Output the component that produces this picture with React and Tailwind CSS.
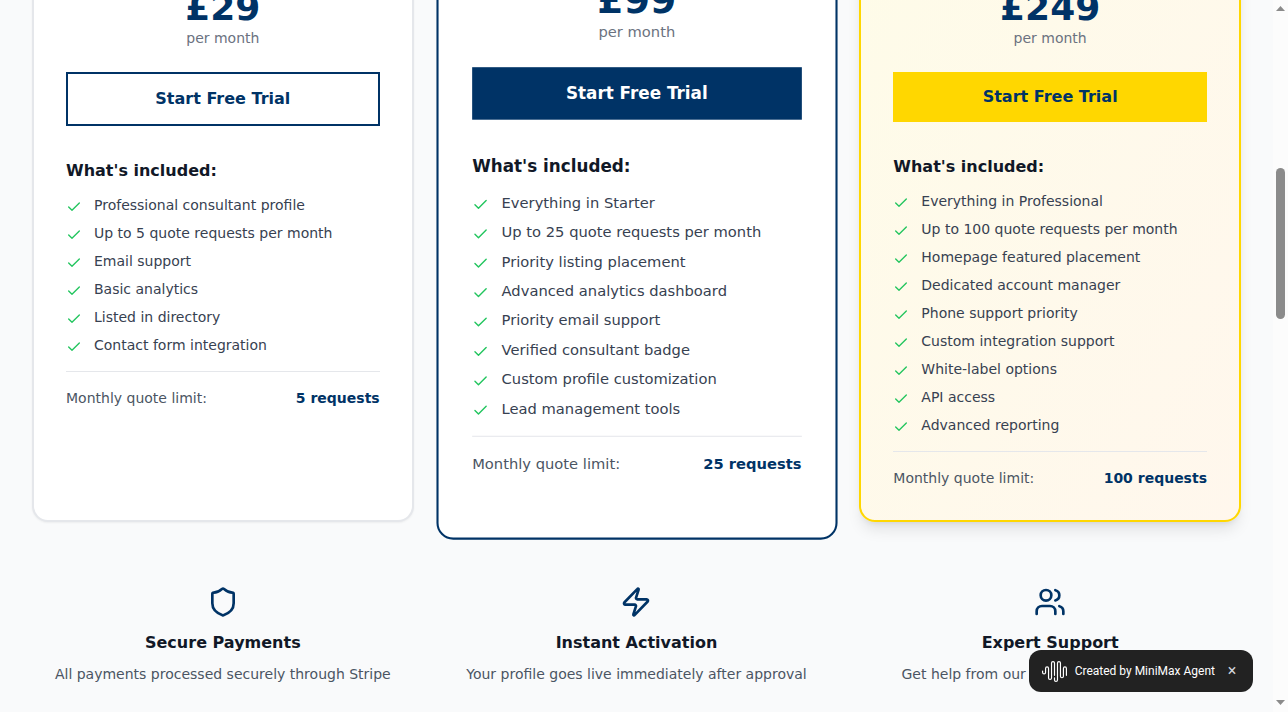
import { Check, Shield, Zap, Users } from "lucide-react";

const plans = [
  {
    price: "£29",
    limit: "5 requests",
    card: "border-[#e5e7eb] bg-white shadow-xs",
    button: "border-2 border-[#003366] bg-white text-[#003366]",
    features: [
      "Professional consultant profile",
      "Up to 5 quote requests per month",
      "Email support",
      "Basic analytics",
      "Listed in directory",
      "Contact form integration",
    ],
  },
  {
    price: "£99",
    limit: "25 requests",
    card: "scale-105 border-[#003366] bg-white",
    button: "bg-[#003366] text-white",
    features: [
      "Everything in Starter",
      "Up to 25 quote requests per month",
      "Priority listing placement",
      "Advanced analytics dashboard",
      "Priority email support",
      "Verified consultant badge",
      "Custom profile customization",
      "Lead management tools",
    ],
  },
  {
    price: "£249",
    limit: "100 requests",
    card: "border-[#ffd700] bg-linear-to-br from-[#fefce8] to-[#fff7ed] shadow-lg",
    button: "bg-[#ffd700] text-[#003366]",
    features: [
      "Everything in Professional",
      "Up to 100 quote requests per month",
      "Homepage featured placement",
      "Dedicated account manager",
      "Phone support priority",
      "Custom integration support",
      "White-label options",
      "API access",
      "Advanced reporting",
    ],
  },
];

const benefits = [
  { Icon: Shield, title: "Secure Payments", text: "All payments processed securely through Stripe" },
  { Icon: Zap, title: "Instant Activation", text: "Your profile goes live immediately after approval" },
  { Icon: Users, title: "Expert Support", text: "Get help from our dedicated support team" },
];

function PlanCard({ plan }) {
  return (
    <article className={`rounded-2xl border-2 px-8 pt-[172px] pb-8 ${plan.card}`}>
      <div className="mb-6 text-center">
        <div className="text-4xl font-bold text-[#003366]">{plan.price}</div>
        <div className="text-sm text-[#6b7280]">per month</div>
      </div>
      <button type="button" className={`block w-full px-6 py-3 text-base leading-[26px] font-semibold ${plan.button}`}>
        Start Free Trial
      </button>
      <h4 className="mt-8 mb-3 leading-[25px] font-semibold text-[#111827]">What's included:</h4>
      <ul className="space-y-2">
        {plan.features.map((feature) => (
          <li key={feature} className="flex items-start gap-3 text-sm text-[#374151]">
            <Check className="mt-1 size-4 shrink-0 text-[#22c55e]" />
            <span>{feature}</span>
          </li>
        ))}
      </ul>
      <div className="mt-4 flex justify-between border-t border-[#e5e7eb] pt-4 text-sm">
        <span className="text-[#4b5563]">Monthly quote limit:</span>
        <span className="font-semibold text-[#003366]">{plan.limit}</span>
      </div>
    </article>
  );
}

function AgentBadge() {
  return (
    <div className="fixed right-[35px] bottom-5 flex h-[42px] items-center rounded-xl bg-[#222222] pr-3 pl-[13px] font-['Roboto',sans-serif] text-xs text-white">
      <svg viewBox="0 0 24 24" className="mr-2 size-[25px]" fill="currentColor" aria-hidden="true">
        <path d="M11.43 3.92a.86.86 0 1 0-1.718 0v14.236a1.999 1.999 0 0 1-3.997 0V9.022a.86.86 0 1 0-1.718 0v3.87a1.999 1.999 0 0 1-3.997 0V11.49a.57.57 0 0 1 1.139 0v1.404a.86.86 0 0 0 1.719 0V9.022a1.999 1.999 0 0 1 3.997 0v9.134a.86.86 0 0 0 1.719 0V3.92a1.998 1.998 0 1 1 3.996 0v11.788a.57.57 0 1 1-1.139 0zm10.572 3.105a2 2 0 0 0-1.999 1.997v7.63a.86.86 0 0 1-1.718 0V3.923a1.999 1.999 0 0 0-3.997 0v16.16a.86.86 0 0 1-1.719 0V18.08a.57.57 0 1 0-1.138 0v2a1.998 1.998 0 0 0 3.996 0V3.92a.86.86 0 0 1 1.719 0v12.73a1.999 1.999 0 0 0 3.996 0V9.023a.86.86 0 1 1 1.72 0v6.686a.57.57 0 0 0 1.138 0V9.022a2 2 0 0 0-1.998-1.997" />
      </svg>
      <span>Created by MiniMax Agent</span>
      <button type="button" aria-label="Close" className="ml-2 flex size-[18px] items-center justify-center text-base leading-none text-gray-300">
        ×
      </button>
    </div>
  );
}

function ScrollTrack() {
  return (
    <div className="flex w-[15px] shrink-0 flex-col items-center bg-[#fcfcfc]" aria-hidden="true">
      <svg viewBox="0 0 15 17" className="h-[17px] w-[15px]" fill="#8b8b8b">
        <path d="M3 11 7.5 6 12 11z" />
      </svg>
      <div className="mt-[151px] h-[151px] w-[9px] rounded-full bg-[#8b8b8b]" />
      <svg viewBox="0 0 15 17" className="mt-auto h-[17px] w-[15px]" fill="#8b8b8b">
        <path d="M3 5h9L7.5 10z" />
      </svg>
    </div>
  );
}

export default function App() {
  return (
    <div className="flex h-screen overflow-hidden bg-[#f9fafb] font-['DejaVu_Sans',sans-serif]">
      <main className="min-w-0 flex-1 overflow-hidden px-8">
        <section className="-mt-[186px] grid grid-cols-3 gap-8">
          {plans.map((plan) => (
            <PlanCard key={plan.price} plan={plan} />
          ))}
        </section>
        <section className="mt-16 grid grid-cols-3 gap-8 text-center">
          {benefits.map(({ Icon, title, text }) => (
            <div key={title} className="flex flex-col items-center">
              <Icon className="mb-3 size-8 text-[#003366]" />
              <h4 className="mb-2 leading-[26px] font-semibold text-[#111827]">{title}</h4>
              <p className="text-sm text-[#4b5563]">{text}</p>
            </div>
          ))}
        </section>
      </main>
      <ScrollTrack />
      <AgentBadge />
    </div>
  );
}
